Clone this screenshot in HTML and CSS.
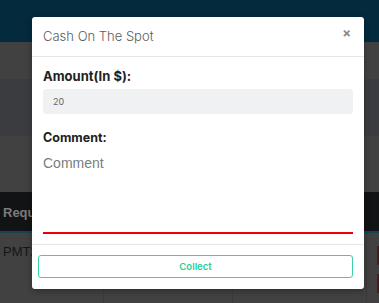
FILE: index.html
```html
<!DOCTYPE html>
<html>
<head>
    <link rel="stylesheet" href="styles.css">
</head>
<body>
    <div class="page">
        <div class="topbar"></div>
        <div class="band band_grey" style="height:37px"></div>
        <div class="band band_blue" style="height:57px"></div>
        <div class="band band_grey" style="height:56px"></div>
        <div class="thead">
            <div class="th">Request ID</div>
            <div class="th">Amount</div>
            <div class="th">Status</div>
            <div class="th"></div>
        </div>
        <div class="trow">
            <div class="td">PMT2041</div>
            <div class="td">$20</div>
            <div class="td">Pending</div>
            <div class="td"><span class="tag"></span><span class="tag"></span></div>
        </div>
    </div>

    <div class="modal">
        <div class="modal_head">
            <span class="modal_title">Cash On The Spot</span>
            <span class="modal_close">&times;</span>
        </div>
        <div class="modal_body">
            <label class="field_label">Amount(In $):</label>
            <div class="amount_box">20</div>
            <label class="field_label comment_label">Comment:</label>
            <textarea class="comment_box" placeholder="Comment"></textarea>
        </div>
        <div class="modal_foot">
            <button class="btn_collect">Collect</button>
        </div>
    </div>
</body>
</html>
```

FILE: styles.css
```css
body { margin: 0; font-family: "Liberation Sans", Arial, sans-serif; background-color: #414141; overflow: hidden; }
.page { width: 379px; height: 303px; }
.topbar { height: 42px; background-color: #032a3d; }
.band_grey { background-color: #414141; }
.band_blue { background-color: #3a3c3f; }
.thead { display: grid; grid-template-columns: 104px 129px 134px 12px; height: 39px; background-color: #121314; border-bottom: 2px solid #1b4253; }
.th { color: #7b7b7b; font-weight: bold; font-size: 13px; padding: 13px 3px 0; white-space: nowrap; overflow: hidden; }
.trow { display: grid; grid-template-columns: 104px 129px 134px 12px; height: 70px; background-color: #414141; }
.td { border-right: 1px solid #3a3a3a; color: #151515; font-size: 13px; padding: 11px 3px 0; white-space: nowrap; overflow: hidden; }
.td:last-child { border-right: none; padding: 13px 0 0 10px; display: flex; flex-direction: column; gap: 9px; }
.tag { display: block; width: 10px; height: 19px; background-color: #4a1c1f; }

.modal { position: absolute; left: 32px; top: 17px; width: 332px; height: 272px; background-color: #fff; border-radius: 3px; box-shadow: 0 2px 6px rgba(0,0,0,0.3); display: flex; flex-direction: column; font-family: Inter, "Open Sans", sans-serif; }
.modal_head { height: 39px; border-bottom: 1px solid #e6e6e6; display: flex; justify-content: space-between; padding: 0 11px; }
.modal_title { font-size: 13px; font-weight: 300; color: #5c5c5c; margin-top: 11px; }
.modal_close { font-size: 13px; font-weight: bold; color: #8a8a8a; margin-top: 8px; margin-right: 2px; }
.modal_body { padding: 0 11px; display: flex; flex-direction: column; }
.field_label { font-size: 13px; font-weight: 700; color: #222; margin-top: 11px; line-height: 16px; }
.amount_box { margin-top: 5px; height: 25px; background-color: #f0f1f2; border-radius: 3px; font-size: 9px; color: #666; padding-left: 10px; line-height: 25px; }
.comment_label { margin-top: 16px; font-size: 12.5px; }
.comment_box { margin-top: 5px; height: 73px; border: none; border-bottom: 2px solid #f00000; resize: none; outline: none; padding: 4px 0; font-family: "Liberation Sans", Arial, sans-serif; font-size: 14px; }
.comment_box::placeholder { color: #7a7d82; }
.modal_foot { margin-top: 10px; border-top: 1px solid #e6e6e6; padding: 9px 11px 0 6px; }
.btn_collect { width: 100%; height: 23px; background-color: #fff; border: 1.5px solid #3ad3a8; border-radius: 3px; color: #25cf9c; font-family: Inter, sans-serif; font-size: 9.5px; font-weight: 600; cursor: pointer; }
```
